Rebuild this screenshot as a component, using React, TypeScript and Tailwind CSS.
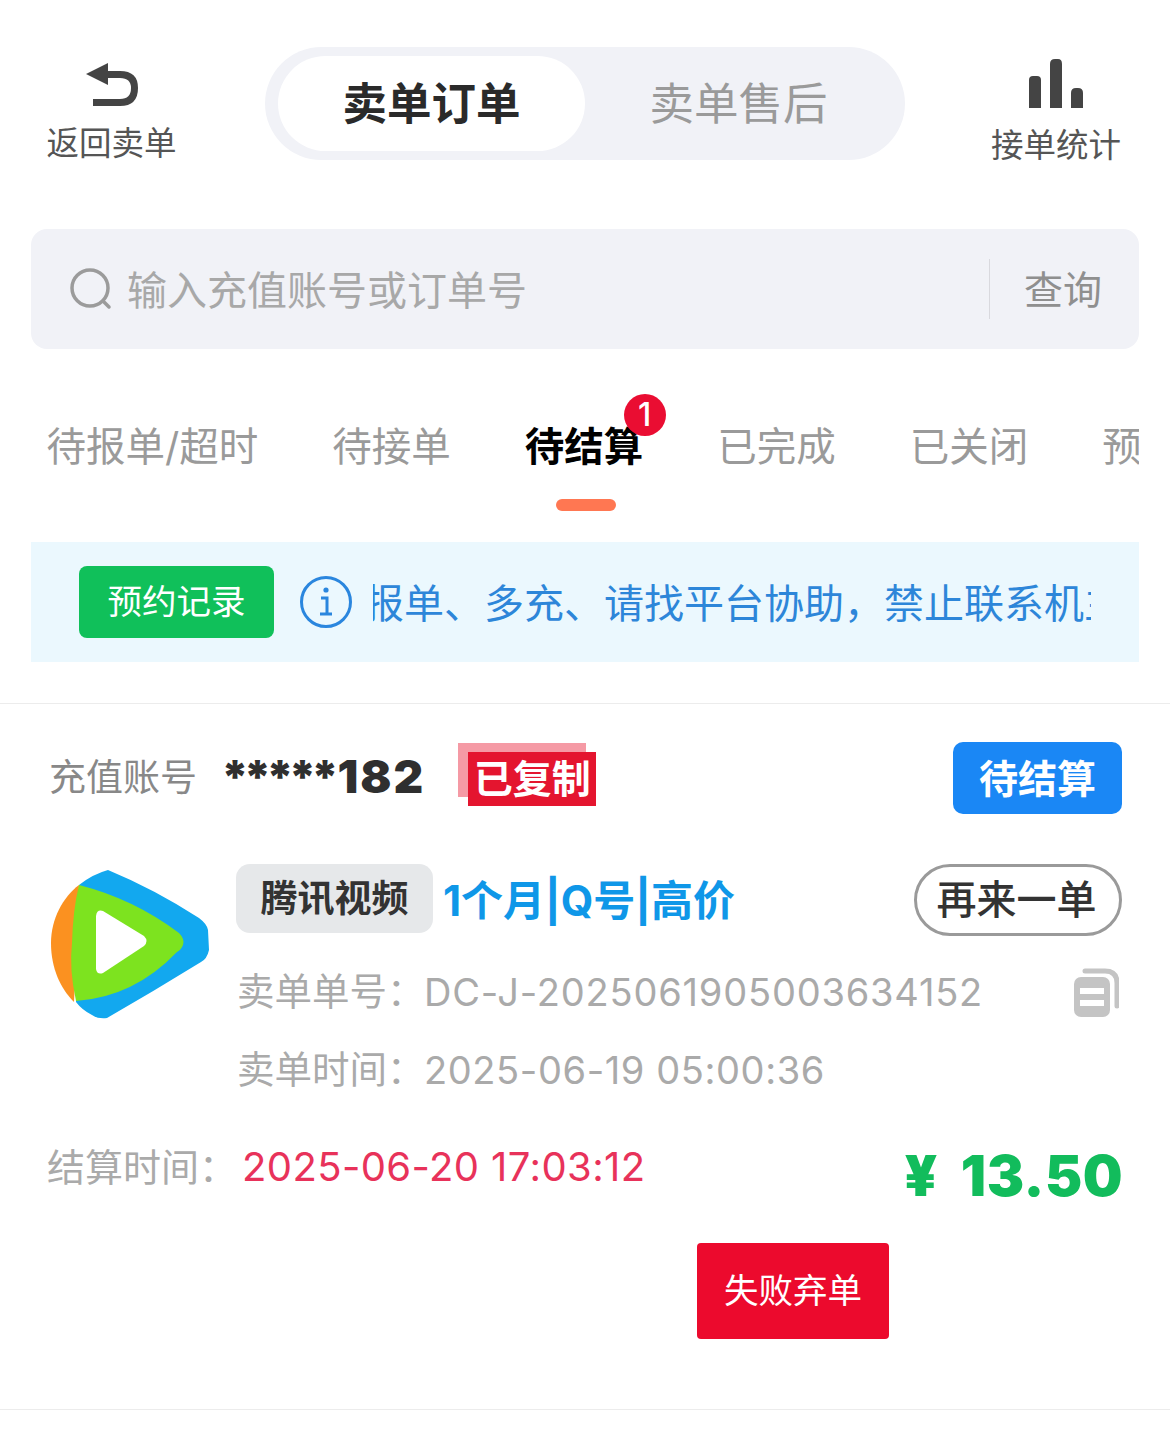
import React from "react";

const font = { fontFamily: '"Inter","Noto Sans CJK SC",sans-serif' };

function BackIcon() {
  return (
    <svg width="52" height="43" viewBox="0 0 52 43">
      <path d="M20 11.5 H34 Q48.5 11.5 48.5 25 Q48.5 39.5 34 39.5 H7" fill="none" stroke="#444" strokeWidth="7" />
      <path d="M0 11 L22 0 V22 Z" fill="#444" />
    </svg>
  );
}

function BarsIcon() {
  return (
    <svg width="54" height="49" viewBox="0 0 54 49">
      <path d="M0 49 V21 Q0 17 4 17 H8 Q12 17 12 21 V49 Z" fill="#444" />
      <path d="M21 49 V5 Q21 0 26 0 H29 Q33 0 33 5 V49 Z" fill="#444" />
      <path d="M42 49 V34 Q42 29 47 29 H49 Q54 29 54 34 V49 Z" fill="#444" />
    </svg>
  );
}

function SearchIcon() {
  return (
    <svg width="44" height="44" viewBox="0 0 44 44">
      <circle cx="21" cy="21" r="18" fill="none" stroke="#9b9b9b" strokeWidth="3.5" />
      <path d="M34 34 L40 40" stroke="#9b9b9b" strokeWidth="3.5" strokeLinecap="round" />
    </svg>
  );
}

function InfoIcon() {
  return (
    <svg width="54" height="54" viewBox="0 0 54 54">
      <circle cx="27" cy="27" r="24.5" fill="none" stroke="#2a86de" strokeWidth="3" />
      <circle cx="27" cy="15" r="2.6" fill="#2a86de" />
      <path d="M22 23 H28 V38 M21 39 H33" fill="none" stroke="#2a86de" strokeWidth="3" />
    </svg>
  );
}

function Logo() {
  return (
    <svg width="160" height="150" viewBox="0 0 160 150" className="shrink-0">
      <path d="M30 16 Q44 5 59 1 Q105 20 150 49 Q158 55 159 61 L160 81 Q158 90 152 93 Q105 122 58 149 Q48 150 43 146 Q33 141 27 133 Z" fill="#12a8ef" />
      <path d="M30 16 C14 28 2 50 2 74 C2 100 12 120 25 133 L28 74 Z" fill="#fb9120" />
      <path d="M30 16 Q85 30 130 64 Q136 70 134 76 Q132 81 128 83 Q85 128 27 132 Q20 100 23 74 Q24 40 30 16 Z" fill="#7de31f" />
      <path d="M47 47 Q48 40 54 42 L95 67 Q100 72 95 77 L54 104 Q48 106 47 100 Z" fill="#fff" />
    </svg>
  );
}

function CopyIcon() {
  return (
    <svg width="46" height="50" viewBox="0 0 46 50">
      <path d="M12 3 H32 Q44 3 44 15 V38" fill="none" stroke="#c4c4c4" strokeWidth="5" strokeLinecap="round" />
      <rect x="1" y="9" width="36" height="40" rx="7" fill="#c4c4c4" />
      <rect x="7" y="20" width="24" height="6" fill="#fff" />
      <rect x="7" y="32" width="24" height="6" fill="#fff" />
    </svg>
  );
}

const tabs = ["待报单/超时", "待接单", "待结算", "已完成", "已关闭", "预约单"];

export default function App() {
  return (
    <div className="w-[1170px] h-[1432px] bg-white overflow-hidden" style={font}>
      {/* header */}
      <div className="h-[229px] pt-[47px] flex items-start">
        <div className="w-[265px] pl-[47px] pr-[89px] flex flex-col items-center pt-[16px]">
          <BackIcon />
          <span className="text-[32.5px] leading-[44px] text-[#555] whitespace-nowrap mt-[16px]">返回卖单</span>
        </div>
        <div className="w-[640px] h-[113px] rounded-full bg-[#f1f2f7] pl-[13px] pt-[9px] flex">
          <div className="w-[307px] h-[95px] pt-[2px] rounded-full bg-white flex items-center justify-center text-[44.5px] font-bold text-[#2a2a2a]">卖单订单</div>
          <div className="w-[307px] h-[95px] pt-[2px] flex items-center justify-center text-[44.5px] text-[#9a9a9a]">卖单售后</div>
        </div>
        <div className="flex-1 flex flex-col items-center pt-[12px] pl-[37px]">
          <BarsIcon />
          <span className="text-[32.5px] leading-[44px] text-[#555] whitespace-nowrap mt-[16px]">接单统计</span>
        </div>
      </div>

      {/* search */}
      <div className="mx-[31px] h-[120px] rounded-[16px] bg-[#f1f2f7] flex items-center pl-[38px]">
        <SearchIcon />
        <span className="ml-[14px] pt-[4px] text-[40px] text-[#a8a8a8] whitespace-nowrap">输入充值账号或订单号</span>
        <div className="ml-auto w-px h-[60px] bg-[#d9d9de]" />
        <span className="w-[149px] pl-[34px] pt-[3px] text-[39px] text-[#8f8f8f]">查询</span>
      </div>

      {/* tabs */}
      <div className="mx-[31px] h-[193px] overflow-hidden flex gap-[74px] pl-[15.5px] pt-[69px]">
        {tabs.map((t) => (
          <div key={t} className="relative shrink-0 flex flex-col items-center">
            <span className={t === "待结算" ? "text-[39.5px] leading-[58px] font-bold text-black whitespace-nowrap" : "text-[39.5px] leading-[58px] text-[#9a9a9a] whitespace-nowrap"}>{t}</span>
            {t === "待结算" && <div className="w-[60px] h-[12px] rounded-full bg-[#ff7752] mt-[23px] ml-[4px]" />}
            {t === "待结算" && (
              <div className="absolute left-[99px] top-[-24px] w-[42px] h-[42px] rounded-full bg-[#ea0d32] flex items-center justify-center text-[32px] font-medium text-white leading-none">1</div>
            )}
          </div>
        ))}
      </div>

      {/* banner */}
      <div className="mx-[31px] h-[120px] bg-[#ebf8fe] flex items-center pl-[48px]">
        <div className="w-[195px] h-[72px] rounded-[8px] bg-[#10c05a] flex items-center justify-center text-[34.5px] text-white shrink-0 whitespace-nowrap">预约记录</div>
        <div className="ml-[25px] shrink-0"><InfoIcon /></div>
        <div className="ml-[20px] w-[718px] pt-[4px] overflow-hidden whitespace-nowrap text-[40px] text-[#2d86d9]">
          <span className="inline-block ml-[-9px]">报单、多充、请找平台协助，禁止联系机主</span>
        </div>
      </div>

      {/* card */}
      <div className="mt-[41px] border-t border-b border-[#ececec] h-[707px] pl-[49px] pr-[48px] pt-[38px]">
        <div className="h-[72px] flex items-center">
          <span className="text-[37px] text-[#888] whitespace-nowrap w-[172px]">充值账号</span>
          <span className="text-[46px] font-black text-[#2f2f2f] whitespace-nowrap mt-[-4px]">
            <span className="tracking-[-5.5px]">*****</span><span className="ml-[4px] tracking-[2px]">182</span>
          </span>
          <div className="relative ml-[43px] w-[128px] h-[54px] mt-[2px]">
            <div className="absolute left-[-10px] top-[-9px] w-[128px] h-[54px] bg-[#f59aa5]" />
            <div className="relative w-[128px] h-[54px] bg-[#e4152f] flex items-center justify-center text-[39px] font-bold text-white whitespace-nowrap">已复制</div>
          </div>
          <div className="ml-auto w-[169px] h-[72px] pt-[3px] rounded-[10px] bg-[#1a87f5] flex items-center justify-center text-[39px] font-bold text-white whitespace-nowrap">待结算</div>
        </div>

        <div className="mt-[50px] flex">
          <div className="mt-[5px]"><Logo /></div>
          <div className="flex-1 ml-[27px]">
            <div className="flex items-center h-[72px]">
              <div className="w-[197px] h-[69px] rounded-[14px] bg-[#e6e8ea] flex items-center justify-center text-[37px] font-bold text-[#333] whitespace-nowrap mb-[3px]">腾讯视频</div>
              <span className="ml-[10px] text-[42px] font-bold text-[#0f97e8] whitespace-nowrap">1个月|Q号|高价</span>
              <div className="ml-auto w-[208px] h-[72px] pr-[3px] rounded-full border-[3px] border-[#9a9a9a] flex items-center justify-center text-[40px] font-medium text-[#333] whitespace-nowrap">再来一单</div>
            </div>
            <div className="mt-[17px] h-[78px] flex items-center pl-[1px] pr-[3px] text-[38px] text-[#aaa] whitespace-nowrap">
              <span className="w-[187px] text-[37.5px]">卖单单号：</span>
              <span className="tracking-[0.8px]">DC-J-2025061905003634152</span>
              <div className="ml-auto mb-[-2px]"><CopyIcon /></div>
            </div>
            <div className="h-[78px] flex items-center pl-[1px] text-[38px] text-[#aaa] whitespace-nowrap">
              <span className="w-[187px] text-[37.5px]">卖单时间：</span>
              <span className="tracking-[0.6px]">2025-06-19 05:00:36</span>
            </div>
          </div>
        </div>

        <div className="mt-[27px] h-[80px] flex items-center">
          <span className="ml-[-2px] w-[195px] text-[38px] text-[#aaa] whitespace-nowrap mb-[18px]">结算时间：</span>
          <span className="text-[40px] text-[#e8325a] whitespace-nowrap tracking-[0.4px] mb-[18px]">2025-06-20 17:03:12</span>
          <span className="ml-auto mr-[-1px] text-[56px] font-black text-[#12bc5c] whitespace-nowrap tracking-[0.5px]">¥<span className="ml-[23px]">13.50</span></span>
        </div>

        <div className="mt-[27px] pl-[648px]">
          <div className="w-[192px] h-[96px] rounded-[4px] bg-[#ec0a2d] flex items-center justify-center text-[34.5px] text-white whitespace-nowrap">失败弃单</div>
        </div>
      </div>
    </div>
  );
}
